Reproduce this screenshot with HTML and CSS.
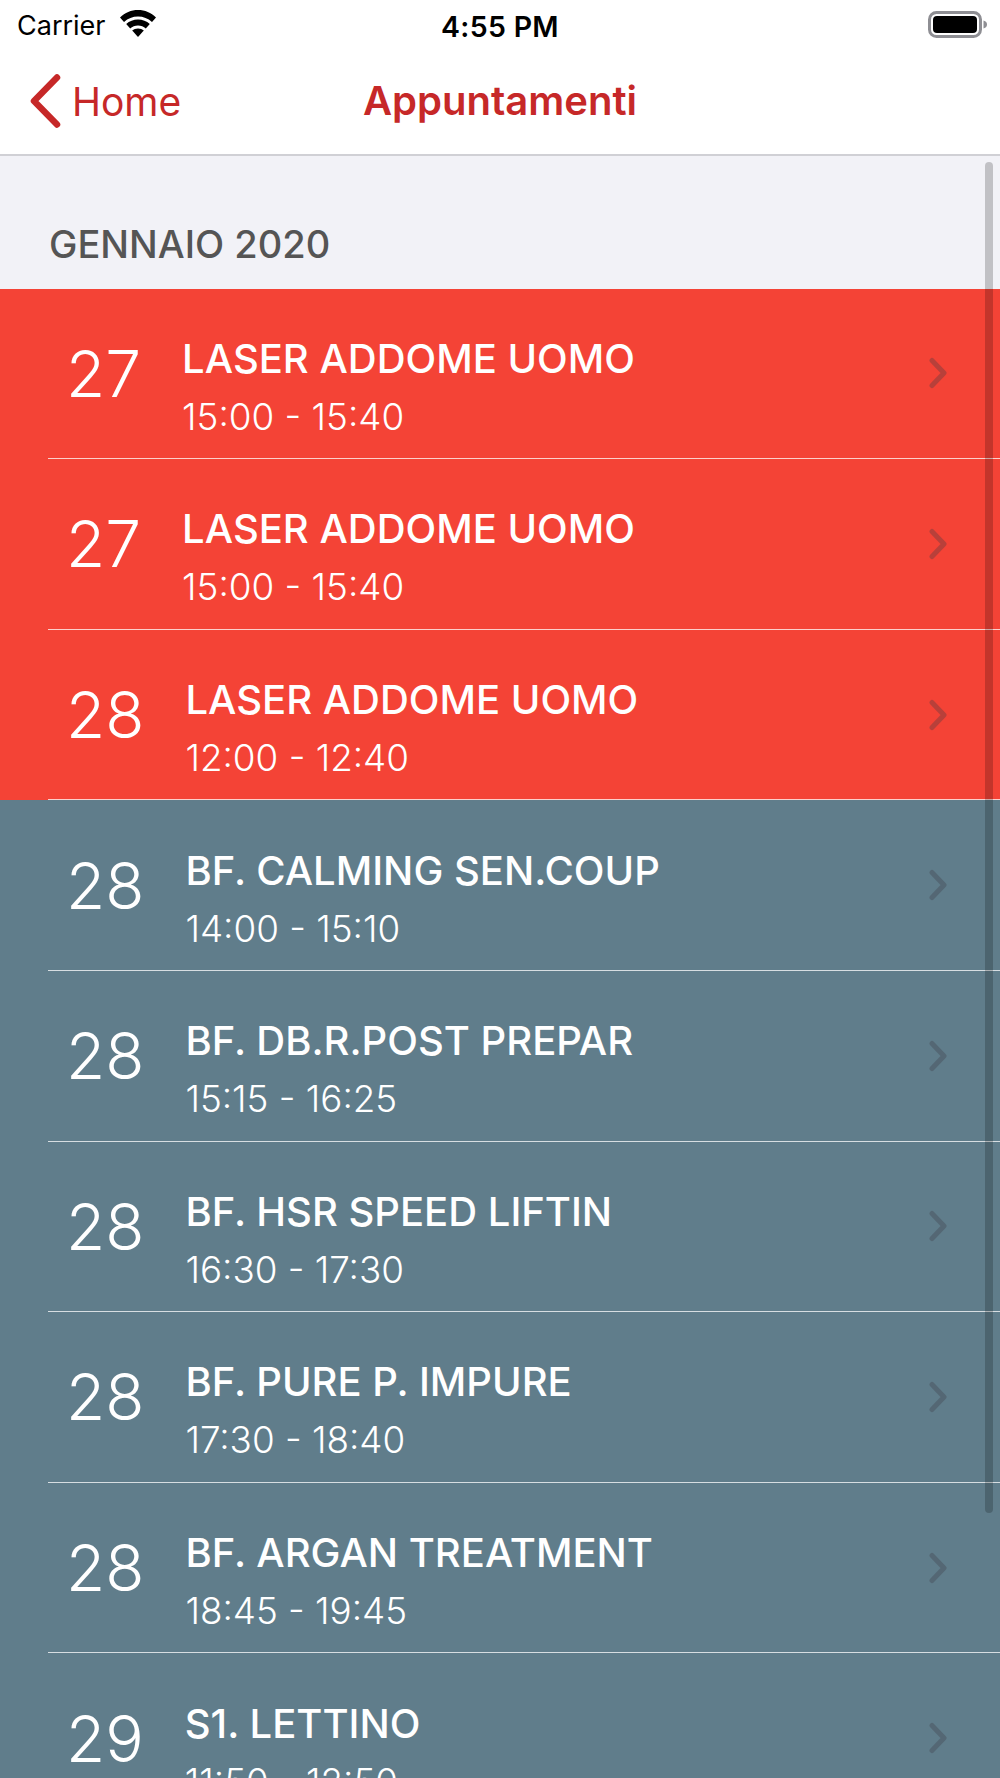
FILE: index.html
```html
<!DOCTYPE html>
<html lang="it">
<head>
    <meta charset="UTF-8">
    <meta name="viewport" content="width=device-width, initial-scale=1.0">
    <title>Appuntamenti</title>
    <link rel="stylesheet" href="styles.css">
</head>
<body>
    <div class="status-bar">
        <div class="status-left">
            <span class="carrier">Carrier</span>
            <svg class="wifi" viewBox="0 0 38 28" width="38" height="28">
                <path d="M19 1C12 1 6 3.600 1 8.500l4 4.500C9 9.400 13.700 7.500 19 7.500S29 9.400 33 13l4-4.500C32 3.600 26 1 19 1Z"/>
                <path d="M19 10.500c-4.500 0-8.600 1.700-11.800 4.500l4 4.500c2.100-1.800 4.800-3 7.800-3s5.700 1.200 7.800 3l4-4.500C27.600 12.200 23.500 10.500 19 10.500Z"/>
                <path d="M19 19.500c-2.300 0-4.300.8-5.800 2.100L19 28l5.800-6.400C23.300 20.300 21.300 19.500 19 19.500Z"/>
            </svg>
        </div>
        <span class="clock">4:55 PM</span>
        <svg class="battery" viewBox="0 0 60 28" width="60" height="28">
            <rect x="1.500" y="1.500" width="51" height="24" rx="7" class="battery-shell"/>
            <rect x="5" y="5" width="44" height="17" rx="4" class="battery-level"/>
            <path d="M55.500 9.500c2.500.7 3.500 2.200 3.500 4s-1 3.300-3.500 4Z" class="battery-nub"/>
        </svg>
    </div>

    <nav class="nav-bar">
        <a class="back-link">
            <svg class="back-arrow" viewBox="0 0 32 54" width="32" height="54">
                <path d="M28 3.500 5 27l23 23.500"/>
            </svg>
            <span>Home</span>
        </a>
        <h1 class="nav-title">Appuntamenti</h1>
    </nav>

    <main class="content">
        <h2 class="month">GENNAIO 2020</h2>
        <ul class="appointments">
            <li class="row row-red">
                <div class="row-inner">
                    <span class="day">27</span>
                    <div class="info">
                        <span class="name">LASER ADDOME UOMO</span>
                        <span class="time">15:00 - 15:40</span>
                    </div>
                    <svg class="chevron" viewBox="0 0 20 32" width="20" height="32"><path d="M3 3.500l12 12.500L3 28.500"/></svg>
                </div>
            </li>
            <li class="row row-red">
                <div class="row-inner">
                    <span class="day">27</span>
                    <div class="info">
                        <span class="name">LASER ADDOME UOMO</span>
                        <span class="time">15:00 - 15:40</span>
                    </div>
                    <svg class="chevron" viewBox="0 0 20 32" width="20" height="32"><path d="M3 3.500l12 12.500L3 28.500"/></svg>
                </div>
            </li>
            <li class="row row-red">
                <div class="row-inner">
                    <span class="day">28</span>
                    <div class="info">
                        <span class="name">LASER ADDOME UOMO</span>
                        <span class="time">12:00 - 12:40</span>
                    </div>
                    <svg class="chevron" viewBox="0 0 20 32" width="20" height="32"><path d="M3 3.500l12 12.500L3 28.500"/></svg>
                </div>
            </li>
            <li class="row">
                <div class="row-inner">
                    <span class="day">28</span>
                    <div class="info">
                        <span class="name">BF. CALMING SEN.COUP</span>
                        <span class="time">14:00 - 15:10</span>
                    </div>
                    <svg class="chevron" viewBox="0 0 20 32" width="20" height="32"><path d="M3 3.500l12 12.500L3 28.500"/></svg>
                </div>
            </li>
            <li class="row">
                <div class="row-inner">
                    <span class="day">28</span>
                    <div class="info">
                        <span class="name">BF. DB.R.POST PREPAR</span>
                        <span class="time">15:15 - 16:25</span>
                    </div>
                    <svg class="chevron" viewBox="0 0 20 32" width="20" height="32"><path d="M3 3.500l12 12.500L3 28.500"/></svg>
                </div>
            </li>
            <li class="row">
                <div class="row-inner">
                    <span class="day">28</span>
                    <div class="info">
                        <span class="name">BF. HSR SPEED LIFTIN</span>
                        <span class="time">16:30 - 17:30</span>
                    </div>
                    <svg class="chevron" viewBox="0 0 20 32" width="20" height="32"><path d="M3 3.500l12 12.500L3 28.500"/></svg>
                </div>
            </li>
            <li class="row">
                <div class="row-inner">
                    <span class="day">28</span>
                    <div class="info">
                        <span class="name">BF. PURE P. IMPURE</span>
                        <span class="time">17:30 - 18:40</span>
                    </div>
                    <svg class="chevron" viewBox="0 0 20 32" width="20" height="32"><path d="M3 3.500l12 12.500L3 28.500"/></svg>
                </div>
            </li>
            <li class="row">
                <div class="row-inner">
                    <span class="day">28</span>
                    <div class="info">
                        <span class="name">BF. ARGAN TREATMENT</span>
                        <span class="time">18:45 - 19:45</span>
                    </div>
                    <svg class="chevron" viewBox="0 0 20 32" width="20" height="32"><path d="M3 3.500l12 12.500L3 28.500"/></svg>
                </div>
            </li>
            <li class="row">
                <div class="row-inner">
                    <span class="day">29</span>
                    <div class="info">
                        <span class="name">S1. LETTINO</span>
                        <span class="time">11:50 - 12:50</span>
                    </div>
                    <svg class="chevron" viewBox="0 0 20 32" width="20" height="32"><path d="M3 3.500l12 12.500L3 28.500"/></svg>
                </div>
            </li>
        </ul>
        <div class="scroll-thumb"></div>
    </main>
</body>
</html>
```

FILE: styles.css
```css
* {
    box-sizing: border-box;
}

html, body {
    height: 100%;
}

body {
    margin: 0;
    overflow: hidden;
    background-color: #fff;
    color: #000;
    font-family: 'Inter', 'Liberation Sans', sans-serif;
}

/* status bar */
.status-bar {
    display: flex;
    align-items: center;
    justify-content: space-between;
    position: relative;
    height: 50px;
    padding: 2px 12px 0 17px;
}

.status-left {
    display: flex;
    align-items: center;
    gap: 13px;
}

.carrier {
    font-size: 27px;
    line-height: 48px;
}

.wifi {
    margin-top: -6px;
    fill: #000;
}

.clock {
    position: absolute;
    left: 0;
    right: 0;
    text-align: center;
    font-size: 28.500px;
    font-weight: 600;
    letter-spacing: 0.3px;
}

.battery {
    margin-top: -2px;
}

.battery-shell {
    fill: none;
    stroke: #8e8e93;
    stroke-width: 3;
}

.battery-level {
    fill: #000;
}

.battery-nub {
    fill: #8e8e93;
}

/* navigation */
.nav-bar {
    display: flex;
    align-items: center;
    justify-content: center;
    position: relative;
    height: 106px;
    padding-bottom: 3px;
    border-bottom: 2px solid #d0d0d5;
    color: #c62828;
}

.back-link {
    display: flex;
    align-items: center;
    gap: 11px;
    position: absolute;
    left: 29px;
    top: 24px;
    font-size: 39px;
}

.back-arrow {
    fill: none;
    stroke: #c62828;
    stroke-width: 6.500;
    stroke-linecap: round;
    stroke-linejoin: round;
}

.nav-title {
    margin: 0;
    font-size: 40px;
    font-weight: 600;
}

/* list */
.content {
    position: relative;
    height: 1622px;
    overflow: hidden;
    background-color: #f2f2f7;
}

.month {
    display: flex;
    align-items: flex-end;
    height: 132.6px;
    margin: 0;
    padding: 0 0 22px 49px;
    color: #555;
    font-size: 38px;
    font-weight: 500;
}

.appointments {
    margin: 0;
    padding: 0;
    list-style: none;
}

.row {
    height: 170.6px;
    padding-left: 48px;
    background-color: #607d8b;
    color: #fff;
}

.row-red {
    background-color: #f44336;
}

.row-inner {
    display: flex;
    align-items: center;
    height: 100%;
    padding: 0 51px 0 18px;
    border-bottom: 1px solid rgba(255, 255, 255, 0.75);
}

.day {
    margin-right: 41px;
    font-size: 64px;
    font-weight: 340;
}

.info {
    display: flex;
    flex: 1;
    flex-direction: column;
    gap: 14px;
    padding-top: 29px;
}

.name {
    font-size: 40px;
    font-weight: 500;
    line-height: 44px;
}

.time {
    font-size: 36.800px;
    font-weight: 340;
    line-height: 44px;
}

.chevron {
    fill: none;
    stroke: rgba(60, 60, 67, 0.32);
    stroke-width: 5;
    stroke-linecap: round;
    stroke-linejoin: round;
}

.scroll-thumb {
    position: absolute;
    top: 6px;
    right: 7px;
    width: 8px;
    height: 1351px;
    border-radius: 4px;
    background-color: rgba(0, 0, 0, 0.2);
}
```
